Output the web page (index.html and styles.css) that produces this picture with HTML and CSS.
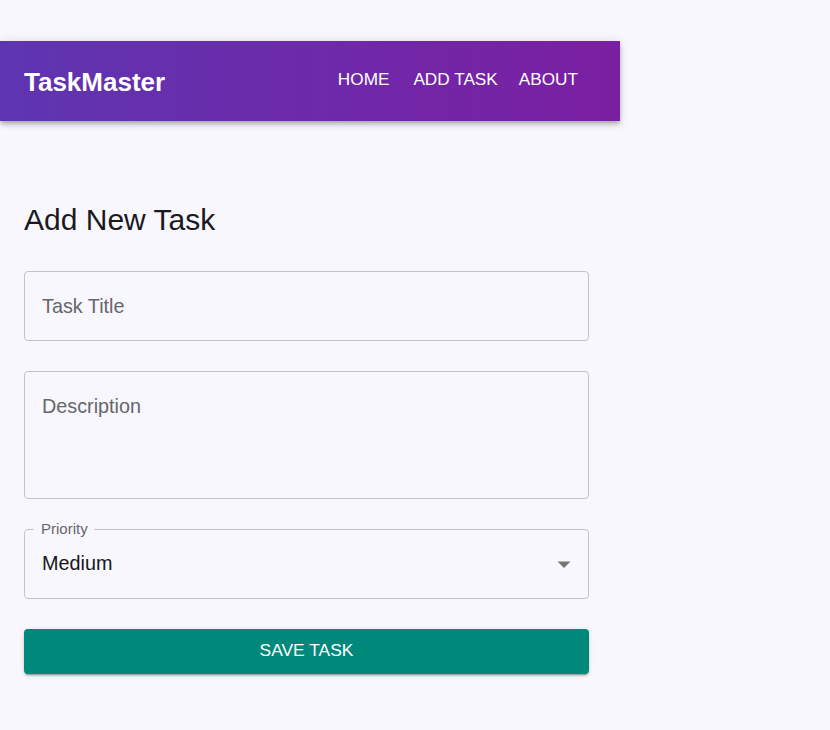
FILE: index.html
```html
<!DOCTYPE html>
<html lang="en">
<head>
<meta charset="utf-8">
<title>TaskMaster</title>
<link rel="stylesheet" href="styles.css">
</head>
<body>
<div class="page">
  <header class="appbar">
    <div class="brand">TaskMaster</div>
    <nav class="nav">
      <a class="nav-btn nav-home" href="#">HOME</a>
      <a class="nav-btn nav-add" href="#">ADD TASK</a>
      <a class="nav-btn nav-about" href="#">ABOUT</a>
    </nav>
  </header>
  <main class="main">
    <h1 class="heading">Add New Task</h1>
    <form class="form">
      <input class="field field-input" type="text" placeholder="Task Title">
      <textarea class="field field-area" placeholder="Description"></textarea>
      <div class="field field-select">
        <span class="select-label">Priority</span>
        <span class="select-value">Medium</span>
        <svg class="select-arrow" width="14" height="7" viewBox="0 0 14 7"><polygon points="0.5,0.5 13.5,0.5 7,7" fill="#757575"/></svg>
      </div>
      <button class="save-btn" type="button">SAVE TASK</button>
    </form>
  </main>
</div>
</body>
</html>
```

FILE: styles.css
```css
* { box-sizing: border-box; }

html, body {
  margin: 0;
  padding: 0;
  background: #f8f7fd;
  font-family: "Liberation Sans", Arial, sans-serif;
}

.page {
  width: 620px;
  padding-top: 41px;
}

.appbar {
  height: 80px;
  display: flex;
  align-items: center;
  justify-content: space-between;
  padding: 0 34px 0 24px;
  background: linear-gradient(90deg, #5e35b1 0%, #7b1fa2 100%);
  box-shadow: 0 2px 4px -1px rgba(0,0,0,0.2), 0 4px 5px 0 rgba(0,0,0,0.14), 0 1px 10px 0 rgba(0,0,0,0.12);
  color: #fff;
}

.brand {
  font-size: 26px;
  font-weight: 700;
  line-height: 1;
  margin-top: 1px;
}

.nav {
  display: flex;
  margin-top: -3px;
}

.nav-btn {
  display: block;
  padding: 6px 8px;
  color: #fff;
  text-decoration: none;
  font-size: 17.2px;
  line-height: 1.5;
  text-align: center;
}

.nav-home { margin-right: 8px; }
.nav-add { margin-right: 5px; }

.main {
  padding: 0 31px 0 24px;
}

.heading {
  margin: 81px 0 33px;
  font-size: 30px;
  font-weight: 400;
  line-height: 36px;
  color: #1a1a1e;
}

.form {
  display: flex;
  flex-direction: column;
  gap: 30px;
  width: 565px;
  padding-bottom: 40px;
}

.field {
  display: block;
  width: 100%;
  margin: 0;
  border: 1px solid #c4c4c8;
  border-radius: 4px;
  background: transparent;
  font-family: "Liberation Sans", Arial, sans-serif;
  font-size: 19.8px;
  color: #1f1f1f;
  outline: none;
}

.field::placeholder {
  color: #66666b;
  opacity: 1;
}

.field-input {
  height: 70px;
  padding: 0 17px;
}

.field-area {
  height: 128px;
  padding: 23px 17px 10px;
  line-height: 22px;
  resize: none;
}

.field-select {
  position: relative;
  height: 70px;
  display: flex;
  align-items: center;
  justify-content: space-between;
  padding: 0 17px 2px 17px;
}

.select-label {
  position: absolute;
  top: -10px;
  left: 9px;
  padding: 0 6px 0 7px;
  background: #f8f7fd;
  font-size: 15px;
  line-height: 17px;
  color: #66666b;
}

.select-value {
  line-height: 24px;
  color: #17171b;
}

.select-arrow {
  display: block;
  margin-top: 2px;
}

.save-btn {
  height: 45px;
  border: 0;
  border-radius: 4px;
  background: #00897b;
  color: #fff;
  font-family: "Liberation Sans", Arial, sans-serif;
  font-size: 17.4px;
  line-height: 43px;
  padding: 0 0 2px;
  box-shadow: 0 3px 1px -2px rgba(0,0,0,0.2), 0 2px 2px 0 rgba(0,0,0,0.14), 0 1px 5px 0 rgba(0,0,0,0.12);
  cursor: pointer;
}
```
